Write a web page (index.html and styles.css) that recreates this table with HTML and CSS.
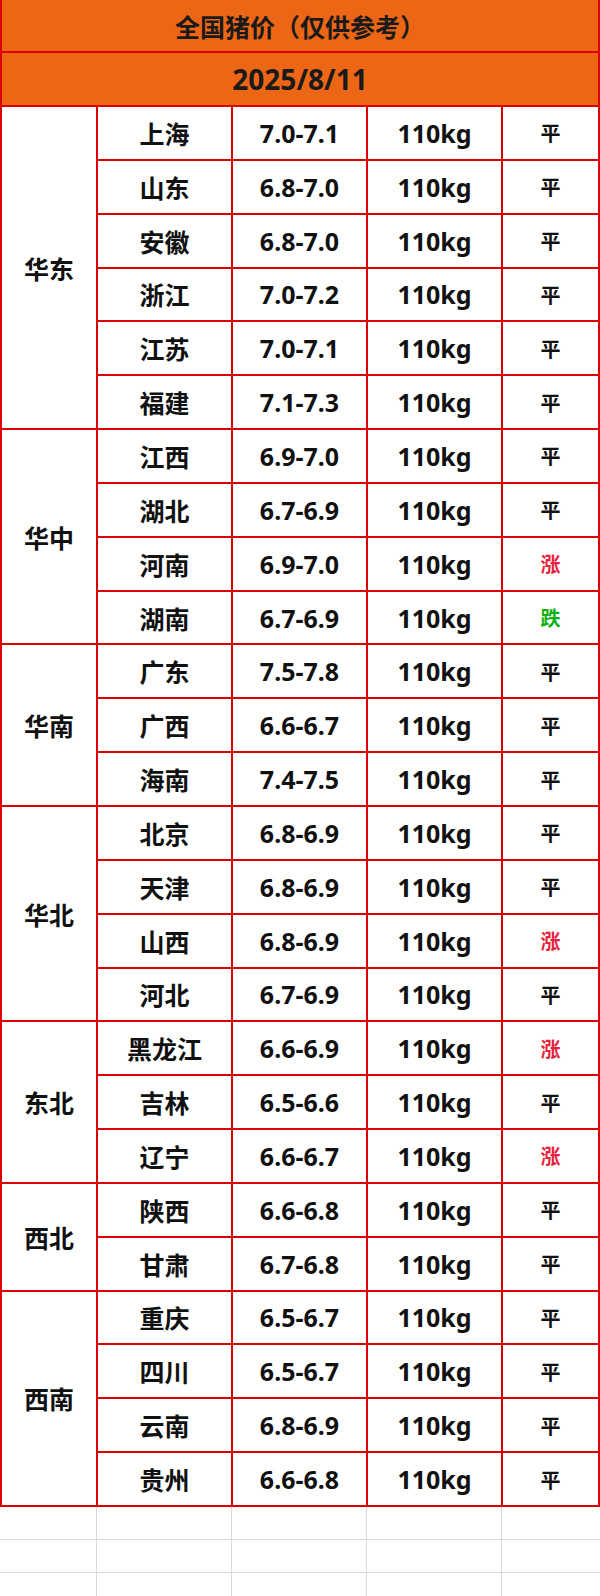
FILE: index.html
```html
<!DOCTYPE html>
<html lang="zh-CN">
<head>
<meta charset="utf-8">
<title>全国猪价</title>
<link rel="stylesheet" href="styles.css">
</head>
<body>
<div class="sheet">
  <div class="head title">全国猪价（仅供参考）</div>
  <div class="head date">2025/8/11</div>

  <div class="region r6">华东</div>
  <div class="cell">上海</div><div class="cell num">7.0-7.1</div><div class="cell num">110kg</div><div class="cell trend">平</div>
  <div class="cell">山东</div><div class="cell num">6.8-7.0</div><div class="cell num">110kg</div><div class="cell trend">平</div>
  <div class="cell">安徽</div><div class="cell num">6.8-7.0</div><div class="cell num">110kg</div><div class="cell trend">平</div>
  <div class="cell">浙江</div><div class="cell num">7.0-7.2</div><div class="cell num">110kg</div><div class="cell trend">平</div>
  <div class="cell">江苏</div><div class="cell num">7.0-7.1</div><div class="cell num">110kg</div><div class="cell trend">平</div>
  <div class="cell">福建</div><div class="cell num">7.1-7.3</div><div class="cell num">110kg</div><div class="cell trend">平</div>

  <div class="region r4">华中</div>
  <div class="cell">江西</div><div class="cell num">6.9-7.0</div><div class="cell num">110kg</div><div class="cell trend">平</div>
  <div class="cell">湖北</div><div class="cell num">6.7-6.9</div><div class="cell num">110kg</div><div class="cell trend">平</div>
  <div class="cell">河南</div><div class="cell num">6.9-7.0</div><div class="cell num">110kg</div><div class="cell trend up">涨</div>
  <div class="cell">湖南</div><div class="cell num">6.7-6.9</div><div class="cell num">110kg</div><div class="cell trend down">跌</div>

  <div class="region r3">华南</div>
  <div class="cell">广东</div><div class="cell num">7.5-7.8</div><div class="cell num">110kg</div><div class="cell trend">平</div>
  <div class="cell">广西</div><div class="cell num">6.6-6.7</div><div class="cell num">110kg</div><div class="cell trend">平</div>
  <div class="cell">海南</div><div class="cell num">7.4-7.5</div><div class="cell num">110kg</div><div class="cell trend">平</div>

  <div class="region r4">华北</div>
  <div class="cell">北京</div><div class="cell num">6.8-6.9</div><div class="cell num">110kg</div><div class="cell trend">平</div>
  <div class="cell">天津</div><div class="cell num">6.8-6.9</div><div class="cell num">110kg</div><div class="cell trend">平</div>
  <div class="cell">山西</div><div class="cell num">6.8-6.9</div><div class="cell num">110kg</div><div class="cell trend up">涨</div>
  <div class="cell">河北</div><div class="cell num">6.7-6.9</div><div class="cell num">110kg</div><div class="cell trend">平</div>

  <div class="region r3">东北</div>
  <div class="cell">黑龙江</div><div class="cell num">6.6-6.9</div><div class="cell num">110kg</div><div class="cell trend up">涨</div>
  <div class="cell">吉林</div><div class="cell num">6.5-6.6</div><div class="cell num">110kg</div><div class="cell trend">平</div>
  <div class="cell">辽宁</div><div class="cell num">6.6-6.7</div><div class="cell num">110kg</div><div class="cell trend up">涨</div>

  <div class="region r2">西北</div>
  <div class="cell">陕西</div><div class="cell num">6.6-6.8</div><div class="cell num">110kg</div><div class="cell trend">平</div>
  <div class="cell">甘肃</div><div class="cell num">6.7-6.8</div><div class="cell num">110kg</div><div class="cell trend">平</div>

  <div class="region r4">西南</div>
  <div class="cell">重庆</div><div class="cell num">6.5-6.7</div><div class="cell num">110kg</div><div class="cell trend">平</div>
  <div class="cell">四川</div><div class="cell num">6.5-6.7</div><div class="cell num">110kg</div><div class="cell trend">平</div>
  <div class="cell">云南</div><div class="cell num">6.8-6.9</div><div class="cell num">110kg</div><div class="cell trend">平</div>
  <div class="cell">贵州</div><div class="cell num">6.6-6.8</div><div class="cell num">110kg</div><div class="cell trend">平</div>
</div>
<div class="blank">
  <div></div><div></div><div></div><div></div><div></div>
  <div></div><div></div><div></div><div></div><div></div>
  <div></div><div></div><div></div><div></div><div></div>
</div>
</body>
</html>
```
FILE: styles.css
```css
html, body {
  margin: 0;
  padding: 0;
  background: #ffffff;
}

body {
  width: 600px;
  font-family: "Noto Sans", "Noto Sans CJK SC", sans-serif;
  font-weight: 700;
  color: #111111;
}

.sheet {
  display: grid;
  grid-template-columns: 94px 133px 133px 133px 95px;
  grid-template-rows: 51px 52px repeat(26, 51.85px);
  gap: 2px;
  padding: 0 2px 2px 2px;
  background: #dc0000;
}

.sheet > div {
  display: flex;
  align-items: center;
  justify-content: center;
  background: #ffffff;
  white-space: nowrap;
}

.head {
  grid-column: 1 / -1;
  background: #ec6616 !important;
  color: #1a1a1a;
}

.title {
  font-size: 25px;
}

.date {
  font-size: 28px;
}

.region {
  font-size: 25px;
}

.r6 { grid-row: span 6; }
.r4 { grid-row: span 4; }
.r3 { grid-row: span 3; }
.r2 { grid-row: span 2; }

.cell {
  font-size: 25px;
}

.num {
  font-size: 25px;
}

.trend {
  font-size: 20px;
}

.up {
  color: #e8233d;
}

.down {
  color: #11b011;
}

.blank {
  display: grid;
  grid-template-columns: 97px 135px 135px 135px 98px;
  grid-auto-rows: 33px;
}

.blank > div {
  border-right: 1px solid #dadada;
  border-bottom: 1px solid #dadada;
}

.blank > div:nth-child(5n) {
  border-right: none;
}
```
